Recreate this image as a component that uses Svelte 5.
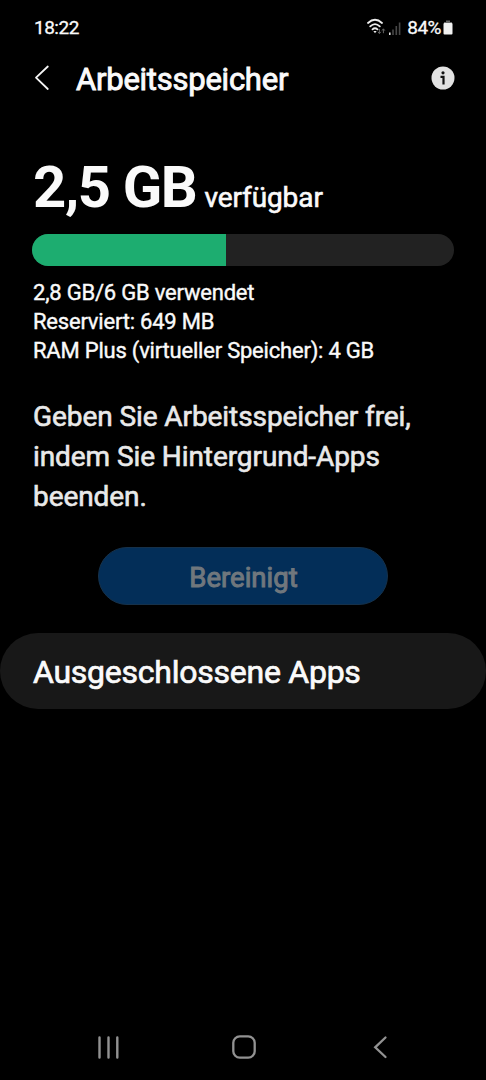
<script>
  const details = [
    '2,8 GB/6 GB verwendet',
    'Reserviert: 649 MB',
    'RAM Plus (virtueller Speicher): 4 GB'
  ];
  const used = 46;
</script>

<div class="screen">
  <div class="status">
    <span class="time">18:22</span>
    <div class="indicators">
      <svg width="36" height="20" viewBox="0 0 36 20">
        <g fill="none" stroke="#eee" stroke-width="1.8" stroke-linecap="round">
          <path d="M2 6 Q9 -.4 16 6" />
          <path d="M4.2 9.4 Q9 4.8 13.8 9.4" />
          <path d="M6.5 12.4 Q9 10.2 11.5 12.4" />
        </g>
        <path d="M7.4 14 L9 16.3 L10.6 14Z" fill="#eee" />
        <path d="M13.4 12v4.5M12 14.8l1.4 1.8 1.4-1.8M17.4 16.2V12M16 13.6l1.4-1.8 1.4 1.8" stroke="#666" fill="none" />
        <path d="M23.8 15.5v2.5" stroke="#eee" stroke-width="1.5" />
        <path d="M27 12.5V18M30.3 9V18M33.6 5.5V18" stroke="#484848" stroke-width="1.6" />
      </svg>
      <span class="percent">84%</span>
      <svg width="10" height="15" viewBox="0 0 10 15">
        <path d="M3 .5h4v1.5h2v2H1V2h2z" fill="#666" />
        <rect x=".5" y="3" width="9" height="11.5" rx="1" fill="#f1f1f1" />
      </svg>
    </div>
  </div>

  <header>
    <svg class="back" width="16" height="28" viewBox="0 0 16 28">
      <path d="M13.8 2.5L2 13.7 13.8 25" fill="none" stroke="#f5f5f5" stroke-width="1.8" stroke-linecap="round" stroke-linejoin="round" />
    </svg>
    <h1>Arbeitsspeicher</h1>
    <svg width="24" height="24" viewBox="0 0 24 24">
      <circle cx="12" cy="12" r="11.5" fill="#e2e2e2" />
      <circle cx="12" cy="6.8" r="1.6" fill="#111" />
      <path d="M9.5 10.8h3v7.7" fill="none" stroke="#111" stroke-width="2.2" />
    </svg>
  </header>

  <main>
    <div class="available"><strong>2,5 GB</strong><span>verfügbar</span></div>
    <div class="meter"><div class="used" style="width: {used}%"></div></div>
    <ul>
      {#each details as line}
        <li>{line}</li>
      {/each}
    </ul>
    <p>Geben Sie Arbeitsspeicher frei,<br />indem Sie Hintergrund-Apps<br />beenden.</p>
    <button disabled>Bereinigt</button>
  </main>

  <div class="excluded"><span>Ausgeschlossene Apps</span></div>

  <nav>
    <svg width="24" height="26" viewBox="0 0 24 26">
      <path d="M2.5 3.5v20M11.5 3.5v20M20.3 3.5v20" stroke="#929292" stroke-width="2.4" stroke-linecap="round" />
    </svg>
    <svg class="home" width="26" height="26" viewBox="0 0 26 26">
      <rect x="2.3" y="2.3" width="21.4" height="21.4" rx="6.5" fill="none" stroke="#929292" stroke-width="2.3" />
    </svg>
    <svg width="16" height="26" viewBox="0 0 16 26">
      <path d="M13.5 3.5L3.2 13.3 13.5 23" fill="none" stroke="#929292" stroke-width="2.3" stroke-linecap="round" />
    </svg>
  </nav>
</div>

<style>
  :global(body) { background: #000; }
  .screen {
    width: 486px;
    height: 1080px;
    box-sizing: border-box;
    display: flex;
    flex-direction: column;
    background: #000;
    color: #fafafa;
    font-family: Roboto, sans-serif;
    white-space: nowrap;
    overflow: hidden;
  }
  svg { display: block; flex: none; }
  .status {
    height: 54px;
    flex: none;
    box-sizing: border-box;
    padding: 3px 33px 3px 34px;
    display: flex;
    align-items: center;
    justify-content: space-between;
    font-size: 19px;
    letter-spacing: -.5px;
    -webkit-text-stroke: .3px;
  }
  .indicators { display: flex; align-items: center; }
  .percent { margin: 0 2px 0 5px; }
  header {
    height: 48px;
    flex: none;
    display: flex;
    align-items: center;
    padding: 0 31px 0 34px;
  }
  .back { margin-right: 26px; }
  h1 {
    margin: 3px 0 0;
    flex: 1;
    font-size: 31px;
    font-weight: 400;
    line-height: 36px;
    letter-spacing: -.25px;
    -webkit-text-stroke: .9px;
  }
  main { padding: 53px 33px 0; display: flex; flex-direction: column; }
  .available { height: 79px; display: flex; align-items: baseline; line-height: 64px; }
  .available strong { font-size: 58px; font-weight: 700; letter-spacing: -1.4px; }
  .available span { font-size: 28px; margin-left: 8px; letter-spacing: -.1px; -webkit-text-stroke: .6px; }
  .meter { height: 32px; margin: 0 -1px; border-radius: 16px; overflow: hidden; background: #222; }
  .used { height: 100%; background: #1dad70; }
  ul { list-style: none; margin: 12px 0 0; padding: 0; }
  li { font-size: 22px; line-height: 29.2px; letter-spacing: -.21px; -webkit-text-stroke: .4px; }
  p { margin: 31px 0 0; color: #e9e9e9; font-size: 28px; line-height: 40.1px; letter-spacing: -.08px; -webkit-text-stroke: .6px; }
  button {
    align-self: center;
    width: 290px;
    height: 58px;
    margin: 30px 0 0;
    padding: 3px 0 0 1px;
    border: 1px solid #16314a;
    border-radius: 29px;
    background: #032e58;
    color: #70777d;
    font: 400 27.5px Roboto, sans-serif;
    -webkit-text-stroke: 1px;
  }
  .excluded {
    height: 76px;
    margin-top: 28px;
    flex: none;
    display: flex;
    align-items: center;
    padding: 3px 33px 0;
    box-sizing: border-box;
    border-radius: 38px;
    background: #181818;
    font-size: 32px;
    letter-spacing: -.25px;
    -webkit-text-stroke: .7px;
  }
  nav {
    margin-top: auto;
    height: 66px;
    display: flex;
    align-items: center;
    justify-content: space-between;
    padding: 0 98px 0 97px;
  }
  .home { margin-right: 5px; }
</style>
